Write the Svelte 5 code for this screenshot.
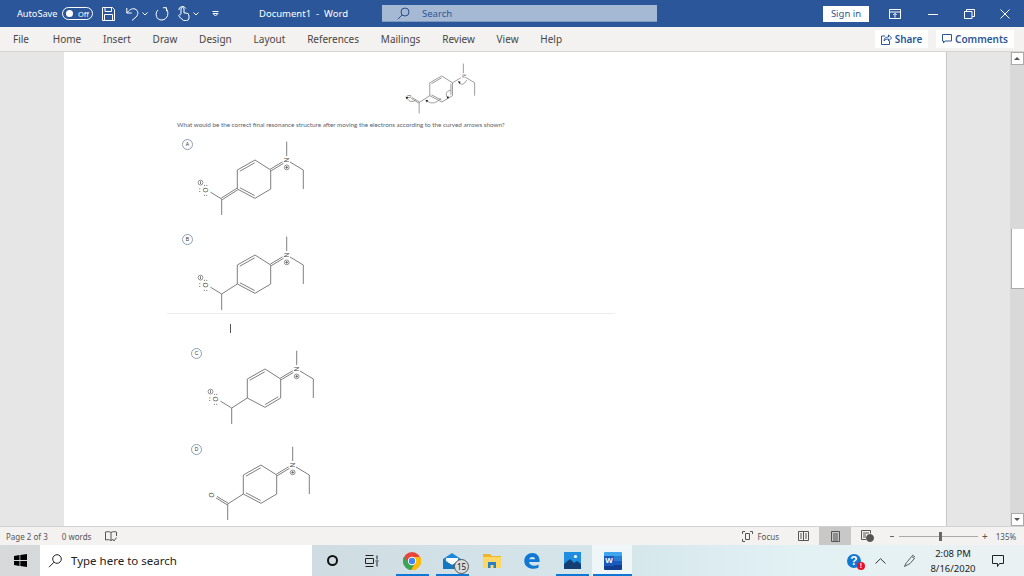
<script>
  const tabs = ['File', 'Home', 'Insert', 'Draw', 'Design', 'Layout', 'References', 'Mailings', 'Review', 'View', 'Help']

  // ring atoms, clockwise from the left upper corner
  const R = [[237.3, 170], [255, 160], [270.7, 170], [270.7, 189], [255, 198.3], [237.3, 189]]
  const C = [221.7, 199]
  const O = [210.5, 192.2]
  const NB = [283, 162.6]
  const center = [254, 179.5]

  const options = [
    { id: 'A', cls: 'optA', ring: [0, 4], exoN: true, exoC: true, oDouble: false, charged: true },
    { id: 'B', cls: 'optB', ring: [0, 4], exoN: true, exoC: false, oDouble: false, charged: true },
    { id: 'C', cls: 'optC', ring: [0, 3], exoN: true, exoC: false, oDouble: false, charged: true },
    { id: 'D', cls: 'optD', ring: [0, 4], exoN: true, exoC: false, oDouble: true, charged: false }
  ]

  const inner = (a, b) => {
    const mx = (a[0] + b[0]) / 2
    const my = (a[1] + b[1]) / 2
    const dx = center[0] - mx
    const dy = center[1] - my
    const l = Math.hypot(dx, dy)
    const s = (p) => [p[0] + (dx / l) * 2.3 + (mx - p[0]) * 0.16, p[1] + (dy / l) * 2.3 + (my - p[1]) * 0.16]
    return [s(a), s(b)]
  }

  const side = (a, b, d) => {
    const l = Math.hypot(b[0] - a[0], b[1] - a[1])
    const nx = (-(b[1] - a[1]) / l) * d
    const ny = ((b[0] - a[0]) / l) * d
    return [[a[0] + nx, a[1] + ny], [b[0] + nx, b[1] + ny]]
  }

  // page coords of the small top drawing, mapped back into the drawing's own units
  const t = (x, y) => `${(237.3 + (x - 430) / 0.68).toFixed(1)} ${(170 + (y - 82.7) / 0.68).toFixed(1)}`
  const curves = [
    [[467, 80], [463, 87], [459.5, 82.5]],
    [[451, 90], [443.5, 92], [448, 97.5]],
    [[441, 98], [435, 106], [427, 101]],
    [[416, 100], [411, 104], [407, 98]]
  ]
</script>

{#snippet bond(a, b)}
  <line x1={a[0]} y1={a[1]} x2={b[0]} y2={b[1]} />
{/snippet}

{#snippet skeleton(ring, exoN, exoC, oDouble)}
  {#each R as p, i}
    {@render bond(p, R[(i + 1) % 6])}
  {/each}
  {#each ring as i}
    {@const s = inner(R[i], R[(i + 1) % 6])}
    {@render bond(s[0], s[1])}
  {/each}
  {#if exoN}
    {@const a = side(R[2], NB, 0.9)}
    {@const b = side(R[2], NB, -0.9)}
    {@render bond(a[0], a[1])}
    {@render bond(b[0], b[1])}
  {:else}
    {@render bond(R[2], NB)}
  {/if}
  {#if exoC}
    {@const a = side(R[5], C, 0.9)}
    {@const b = side(R[5], C, -0.9)}
    {@render bond(a[0], a[1])}
    {@render bond(b[0], b[1])}
  {:else}
    {@render bond(R[5], C)}
  {/if}
  {#if oDouble}
    {@const a = side(C, O, 0.9)}
    {@const b = side(C, O, -0.9)}
    {@render bond(a[0], a[1])}
    {@render bond(b[0], b[1])}
  {:else}
    {@render bond(C, O)}
  {/if}
  {@render bond(C, [221.7, 215])}
  {@render bond([286.7, 141.7], [286.7, 156])}
  {@render bond([290, 162], [303.3, 170])}
  {@render bond([303.3, 170], [303.3, 189])}
  <text class="atom" transform="translate(286.7 160) rotate(90)" text-anchor="middle" y="2.2">N</text>
  <text class="atom" transform="translate(205.5 190) rotate(90)" text-anchor="middle" y="2.2">O</text>
{/snippet}

{#snippet chargedMarks()}
  <circle class="mark" cx="286.7" cy="167.4" r="2.4" />
  <path class="markLine" d="M285.3 167.4h2.8M286.7 166v2.8" />
  <circle class="mark" cx="200.5" cy="182.6" r="2.4" />
  <path class="markLine" d="M200.5 181.2v2.8" />
  <g class="dots">
    <circle cx="199.8" cy="188.8" r=".5" /><circle cx="199.8" cy="191.4" r=".5" />
    <circle cx="204.4" cy="195.2" r=".5" /><circle cx="206.8" cy="195.2" r=".5" />
    <circle cx="204.4" cy="185.3" r=".5" /><circle cx="206.8" cy="185.3" r=".5" />
  </g>
{/snippet}

<div class="word">
  <header class="titleBar">
    <span class="autosave">AutoSave</span>
    <span class="toggle"><i class="toggle__dot"></i><span>Off</span></span>
    <svg class="qa qa--save" width="13" height="14" viewBox="0 0 13 14"><path d="M.5.5h10l2 2v11H.5zM3 .5v4h6.500v-4M2.500 13.500v-6h8v6" /></svg>
    <svg class="qa qa--undo" width="13" height="14" viewBox="0 0 13 14"><path d="M.8 1v5h5M1 6c2-3 5-5 8-4 3 1 4 5 1 8l-4 3.500" /></svg>
    <svg class="qa qa--chev" width="6" height="4" viewBox="0 0 6 4"><path d="M.5.5 3 3 5.500.5" /></svg>
    <svg class="qa qa--redo" width="14" height="14" viewBox="0 0 14 14"><path d="M8 .7h3.500v3.500M11 1.500C14.500 5 13 12.500 7 13 1 13.500-.5 6 3 3" /></svg>
    <svg class="qa qa--touch" width="13" height="15" viewBox="0 0 13 15"><path d="M4 8V3a1.500 1.500 0 0 1 3 0v4h2a3 3 0 0 1 3 3v2a2.500 2.500 0 0 1-2.500 2.500H6.500L2 10.500c-1-1.200.5-2.500 2-1.500M1.800 4a3.700 3.700 0 0 1 7-1.500" /></svg>
    <svg class="qa qa--chev2" width="6" height="4" viewBox="0 0 6 4"><path d="M.5.5 3 3 5.500.5" /></svg>
    <svg class="qa qa--more" width="7" height="6" viewBox="0 0 7 6"><path d="M.5.500h6M1 2.500h5L3.500 5z" /></svg>
    <span class="docTitle">Document1&nbsp; - &nbsp;Word</span>
    <div class="searchBox">
      <svg width="13" height="13" viewBox="0 0 13 13"><circle cx="8" cy="5" r="4" /><path d="M5 8 .8 12.200" /></svg>
      <span>Search</span>
    </div>
    <button class="signIn">Sign in</button>
    <svg class="win win--ribbon" width="12" height="10" viewBox="0 0 12 10"><path d="M.5.500h11v9H.5zM.5 3h11M6 8.500V4.500M4.300 6 6 4.300 7.700 6" /></svg>
    <svg class="win win--min" width="10" height="10" viewBox="0 0 10 10"><path d="M0 5.500h10" /></svg>
    <svg class="win win--restore" width="11" height="10" viewBox="0 0 11 10"><path d="M.5 2.500h7.500v7H.5zM2.500 2.500V.5h8v7H8" /></svg>
    <svg class="win win--close" width="10" height="10" viewBox="0 0 10 10"><path d="m.5.500 9 9M9.500.5l-9 9" /></svg>
  </header>

  <nav class="tabs">
    {#each tabs as tab}
      <span class="tabs__item">{tab}</span>
    {/each}
    <button class="ribbonBtn ribbonBtn--share">
      <svg width="11" height="11" viewBox="0 0 11 11"><path d="M4 2H.5v8.500h8V7M3 7c0-3 2-4 4.500-4V.8L10.500 4 7.500 7V5C5.500 5 4 5.500 3 7z" /></svg>
      Share
    </button>
    <button class="ribbonBtn ribbonBtn--comments">
      <svg width="10" height="10" viewBox="0 0 10 10"><path d="M.5.500h9v6.500H3L1.500 9V7h-1z" /></svg>
      Comments
    </button>
  </nav>

  <main class="workArea">
    <div class="page">
      <svg class="molecule molecule--top" viewBox="195 135 120 85">
        {@render skeleton([0, 2, 4], false, false, true)}
        {#each curves as c}
          <path class="curve" d={`M${t(c[0][0], c[0][1])} Q${t(c[1][0], c[1][1])} ${t(c[2][0], c[2][1])}`} />
          <path class="head" d={`M${t(c[2][0] - 1.2, c[2][1] - 1.2)} L${t(c[2][0] + 1.4, c[2][1] - 0.8)} L${t(c[2][0], c[2][1] + 1.4)} z`} />
        {/each}
      </svg>
      <p class="question">What would be the correct final resonance structure after moving the electrons according to the curved arrows shown?</p>

      {#each options as opt}
        <div class="option {opt.cls}">
          <span class="badge">{opt.id}</span>
          <svg class="molecule" viewBox="195 135 120 85">
            {@render skeleton(opt.ring, opt.exoN, opt.exoC, opt.oDouble)}
            {#if opt.charged}
              {@render chargedMarks()}
            {:else}
              <circle class="mark" cx="286.7" cy="167.4" r="2.4" />
              <path class="markLine" d="M285.3 167.4h2.8M286.7 166v2.8" />
            {/if}
          </svg>
        </div>
        {#if opt.id === 'B'}
          <hr class="divider" />
          <i class="caret"></i>
        {/if}
      {/each}
    </div>
    <div class="scrollBar">
      <span class="scrollBar__btn"><i class="up"></i></span>
      <span class="scrollBar__thumb"></span>
      <span class="scrollBar__btn"><i class="down"></i></span>
    </div>
  </main>

  <footer class="statusBar">
    <span>Page 2 of 3</span>
    <span class="status__words">0 words</span>
    <svg class="statusIcon status__proof" width="12" height="11" viewBox="0 0 12 11"><path d="M6 1.500C4.500.5 2.500.5.500 1v8c2-.5 4-.5 5.500.5 1.500-1 2-1 2-1M6 1.500C7.500.5 9.500.5 11.500 1v4M6 1.500v8M7.500 8l1.500 2 2.500-3.500" /></svg>
    <svg class="statusIcon status__focus" width="11" height="11" viewBox="0 0 11 11"><path d="M.5 3V.5H3M8 .5h2.500V3M.5 8v2.500H3M3.500 2.500h4v6h-4z" /></svg>
    <span class="status__focusText">Focus</span>
    <svg class="statusIcon status__read" width="11" height="10" viewBox="0 0 11 10"><path d="M.5.500h10v9H.5zM5.500.5v9M2 3h2M2 5h2M2 7h2M7 3h2M7 5h2M7 7h2" /></svg>
    <span class="status__print">
      <svg class="statusIcon" width="9" height="11" viewBox="0 0 9 11"><path d="M.5.500h8v10h-8zM2 3h5M2 5h5M2 7h5M2 9h5" /></svg>
    </span>
    <svg class="statusIcon status__web" width="13" height="12" viewBox="0 0 13 12"><path d="M.5.500h9v3M.5.500v9H5M2 3h6M2 5h3M2 7h3" /><circle cx="9" cy="8" r="3.500" fill="#555" /></svg>
    <span class="zoomSlider">
      <i class="zoomSlider__minus"></i>
      <span class="zoomSlider__track"><i class="zoomSlider__thumb"></i></span>
      <span class="zoomSlider__plus">+</span>
    </span>
    <span class="status__pct">135%</span>
  </footer>

  <div class="taskbar">
    <span class="task task--start">
      <svg width="13" height="13" viewBox="0 0 13 13"><path fill="#000" d="M0 2 5.500 1.100V6H0zM6.300 1 13 0v6H6.300zM0 7h5.500v4.900L0 11zM6.300 7H13v6l-6.700-1z" /></svg>
    </span>
    <div class="taskSearch">
      <svg width="14" height="14" viewBox="0 0 14 14"><circle cx="9" cy="5" r="4.300" /><path d="M6 8.200 1 13.200" /></svg>
      <span>Type here to search</span>
    </div>
    <span class="task"><i class="cortana"></i></span>
    <span class="task">
      <svg class="taskView" width="14" height="12" viewBox="0 0 14 12"><path d="M.5.500h8M.5 11.500h8M.5 3.500h8v5h-8zM12 .5v4M12 7v4.500M10.500 6h3" /></svg>
    </span>
    <span class="task task--open">
      <svg width="18" height="18" viewBox="0 0 18 18">
        <circle cx="9" cy="9" r="9" fill="#e8453c" />
        <path fill="#34a853" d="M1.200 4.500A9 9 0 0 0 8 18l3.500-6-6-.5z" />
        <path fill="#fbbc05" d="M9 5h8.200A9 9 0 0 1 8 18l4-6.500z" />
        <circle cx="9" cy="9" r="4.200" fill="#fff" />
        <circle cx="9" cy="9" r="3.200" fill="#4285f4" />
      </svg>
    </span>
    <span class="task task--open">
      <svg width="18" height="16" viewBox="0 0 18 16">
        <path fill="#1e88d8" d="M0 6 9 0l9 6v10H0z" />
        <path fill="#fff" d="M3 5h12v4l-6 3-6-3z" />
        <path fill="#1577c2" d="M0 6l9 6 9-6v10H0z" />
      </svg>
      <b class="mailBadge">15</b>
    </span>
    <span class="task">
      <svg width="18" height="15" viewBox="0 0 18 15">
        <path fill="#f0b429" d="M0 1h7l2 2h9v12H0z" />
        <path fill="#ffd766" d="M0 4h18v11H0z" />
        <path fill="#2a7fc9" d="M5 9h8v6h-2.500v-3h-3v3H5z" />
      </svg>
    </span>
    <span class="task">
      <svg width="16" height="16" viewBox="0 0 16 16"><path fill="#0f78d4" d="M15.600 9H5c.2 3.500 5.500 5 9.500 2.500v3.300C8.500 17.500 .3 15 .3 8 .3 3 4 0 8.500 0c4.500 0 7.500 3.500 7.100 9zM5.200 6.200h6C11 3.200 5.800 3.200 5.200 6.200z" /></svg>
    </span>
    <span class="task task--open">
      <svg width="17" height="17" viewBox="0 0 17 17">
        <path fill="#1e8fe0" d="M0 0h17v17H0z" />
        <path fill="#143f73" d="M0 17v-5l6-5 4 4 3-2 4 3v5z" />
        <circle cx="11.500" cy="4.500" r="1.600" fill="#fff" />
      </svg>
    </span>
    <span class="task task--open task--active">
      <span class="wordIcon">
        <i></i><i></i><i></i><i></i>
        <b>W</b>
      </span>
    </span>
    <div class="tray">
      <span class="helpIcon">?<i>!</i></span>
      <svg class="tray__chev" width="11" height="6" viewBox="0 0 11 6"><path d="M.5 5.500 5.500.7l5 4.800" /></svg>
      <svg class="tray__pen" width="12" height="13" viewBox="0 0 12 13"><path d="M.5 12.500c1-2 1-3 3-5l4-5 3 2-4.500 5c-2 1.500-3 1.500-3 1.500zM8 1l3 2" /></svg>
      <div class="clock"><span>2:08 PM</span><span>8/16/2020</span></div>
      <svg class="tray__note" width="12" height="12" viewBox="0 0 12 12"><path d="M.5.500h11v8H7.500l-2 3v-3H.5z" /></svg>
    </div>
  </div>
</div>

<style>
  :global(body) {
    margin: 0;
    overflow: hidden;
  }

  .word {
    width: 1024px;
    height: 576px;
    display: flex;
    flex-direction: column;
    font-family: 'Noto Sans', 'Open Sans', sans-serif;
    overflow: hidden;
  }

  svg {
    flex: none;
    fill: none;
  }

  /* title bar */
  .titleBar {
    height: 27px;
    flex: none;
    background: #2b579a;
    color: #fff;
    display: flex;
    align-items: center;
    padding-left: 17px;
    font-size: 9.5px;
    box-sizing: border-box;
  }

  .autosave {
    width: 40px;
    font-size: 9.2px;
    white-space: nowrap;
  }

  .toggle {
    width: 31px;
    height: 13px;
    margin-left: 5px;
    border: 1px solid #fff;
    border-radius: 7px;
    box-sizing: border-box;
    display: flex;
    align-items: center;
    gap: 5px;
    padding-left: 3px;
    font-size: 7.5px;
  }

  .toggle__dot {
    width: 7px;
    height: 7px;
    background: #fff;
    border-radius: 50%;
  }

  .qa path {
    stroke: #fff;
    stroke-width: 1;
  }

  .qa--save { margin-left: 9px; }
  .qa--undo { margin-left: 11px; }
  .qa--chev { margin-left: 3px; }
  .qa--redo { margin-left: 7px; }
  .qa--touch { margin-left: 8px; }
  .qa--chev2 { margin-left: 3px; }
  .qa--more { margin-left: 13px; }

  .docTitle {
    margin-left: 40px;
    width: 123px;
    white-space: nowrap;
  }

  .searchBox {
    width: 275px;
    height: 17px;
    background: #a5b8d4;
    border-bottom: 1px solid #7f9abf;
    box-sizing: border-box;
    display: flex;
    align-items: center;
    gap: 12px;
    padding-left: 15px;
    color: #2b579a;
  }

  .searchBox svg {
    stroke: #2b4f85;
    stroke-width: 1;
  }

  .signIn {
    margin-left: 166px;
    width: 46px;
    height: 16px;
    padding: 0;
    border: 0;
    background: #fff;
    color: #2b579a;
    font: 9.5px 'Noto Sans', sans-serif;
  }

  .win {
    stroke: #fff;
    stroke-width: 1;
  }

  .win--ribbon { margin-left: 20px; }
  .win--min { margin-left: 27px; }
  .win--restore { margin-left: 26px; }
  .win--close { margin-left: 25px; }

  /* ribbon tabs */
  .tabs {
    height: 25px;
    flex: none;
    background: #f3f2f1;
    border-bottom: 1px solid #d6d5d4;
    box-sizing: border-box;
    display: flex;
    align-items: center;
    gap: 21.8px;
    padding-left: 13px;
    font-size: 10px;
    color: #484644;
  }

  .tabs__item:first-child {
    margin-right: 2px;
  }

  .ribbonBtn {
    height: 18px;
    padding: 0;
    border: 0;
    background: #fff;
    color: #2b579a;
    font: 600 10px 'Noto Sans', sans-serif;
    display: flex;
    align-items: center;
    justify-content: center;
    gap: 3px;
  }

  .ribbonBtn svg {
    stroke: #2b579a;
    stroke-width: 1;
  }

  .ribbonBtn--share {
    width: 53px;
    margin-left: auto;
  }

  .ribbonBtn--comments {
    width: 78px;
    margin-left: -13.8px;
    margin-right: 10px;
  }

  /* document */
  .workArea {
    flex: 1;
    min-height: 0;
    background: #e6e6e6;
    display: flex;
    justify-content: space-between;
    padding-left: 64px;
  }

  .page {
    width: 882px;
    background: #fff;
    border-right: 1px solid #c6c6c6;
    overflow: hidden;
  }

  .molecule {
    display: block;
    width: 120px;
    height: 85px;
    stroke: #6f6f6f;
    stroke-width: 0.9;
  }

  .molecule--top {
    width: 81.6px;
    height: 57.8px;
    margin: 7px 0 0 337px;
    stroke-width: 1;
  }

  .atom {
    font: 6.5px 'Liberation Sans', sans-serif;
    fill: #4a4a4a;
    stroke: none;
  }

  .mark {
    fill: #fff;
    stroke: #666;
    stroke-width: 0.7;
  }

  .markLine {
    stroke: #444;
    stroke-width: 0.7;
  }

  .dots {
    fill: #444;
    stroke: none;
  }

  .curve {
    stroke: #777;
    stroke-width: 1;
  }

  .head {
    fill: #111;
    stroke: none;
  }

  .question {
    margin: 4px 0 6px 113px;
    height: 8px;
    font: 6.3px/8px Lato, sans-serif;
    color: #5a6270;
    white-space: nowrap;
  }

  .option {
    display: flex;
    height: 95px;
    padding-left: 118px;
  }

  .optB {
    height: 83px;
  }

  .optC {
    padding-left: 127px;
    height: 96px;
  }

  .optD {
    padding-left: 127px;
  }

  .optC .molecule {
    margin-left: 1px;
  }

  .optD .molecule {
    margin-left: -3px;
  }

  .badge {
    width: 11px;
    height: 11px;
    margin: 4px 2px 0 0;
    border: 1px solid #8aa0b4;
    border-radius: 50%;
    box-sizing: border-box;
    flex: none;
    font: 5px/9px 'Liberation Sans', sans-serif;
    text-align: center;
    color: #333;
  }

  .divider {
    margin: 0 0 0 103px;
    width: 448px;
    height: 1px;
    border: 0;
    background: #ececec;
  }

  .caret {
    display: block;
    width: 1px;
    height: 9px;
    margin: 10px 0 11px 166px;
    background: #555;
  }

  .scrollBar {
    width: 14px;
    background: #d9d9d9;
    display: flex;
    flex-direction: column;
    align-items: center;
  }

  .scrollBar__btn {
    width: 13px;
    height: 13px;
    background: #fff;
    border: 1px solid #ababab;
    box-sizing: border-box;
    display: flex;
    align-items: center;
    justify-content: center;
  }

  .scrollBar__thumb {
    width: 13px;
    height: 60px;
    margin: 164px 0 224px;
    background: #fff;
    border-left: 1px solid #ababab;
    border-bottom: 1px solid #ababab;
    box-sizing: border-box;
  }

  .up,
  .down {
    width: 0;
    height: 0;
    border: 3px solid transparent;
  }

  .up {
    border-bottom: 3px solid #555;
    margin-top: -3px;
  }

  .down {
    border-top: 3px solid #555;
    margin-top: 3px;
  }

  /* status bar */
  .statusBar {
    height: 19px;
    flex: none;
    background: #f3f2f1;
    border-top: 1px solid #d2d2d2;
    box-sizing: border-box;
    display: flex;
    align-items: center;
    padding-left: 6px;
    font-size: 8px;
    color: #555;
  }

  .statusIcon {
    stroke: #555;
    stroke-width: 1;
  }

  .status__words { margin-left: 14px; }
  .status__proof { margin-left: 14px; }
  .status__focus { margin-left: 625px; }
  .status__focusText { margin-left: 4px; }
  .status__read { margin-left: 19px; }

  .status__print {
    width: 32px;
    height: 18px;
    margin-left: 10px;
    background: #c8c8c8;
    display: flex;
    align-items: center;
    justify-content: center;
  }

  .status__web { margin-left: 10px; }

  .zoomSlider {
    margin-left: 16px;
    display: flex;
    align-items: center;
  }

  .zoomSlider__minus {
    width: 4px;
    height: 1px;
    background: #666;
  }

  .zoomSlider__track {
    width: 79px;
    height: 1px;
    margin-left: 5px;
    background: #aaa;
    position: relative;
  }

  .zoomSlider__thumb {
    position: absolute;
    left: 40px;
    top: -4px;
    width: 3px;
    height: 9px;
    background: #666;
  }

  .zoomSlider__plus {
    margin-left: 4px;
    font-size: 10px;
    line-height: 10px;
  }

  .status__pct { margin-left: 8px; }

  /* taskbar */
  .taskbar {
    height: 31px;
    flex: none;
    background: linear-gradient(90deg, #d7d9da 0, #cfdde3 32%, #d6e7ec 62%, #e2f1f4 78%, #ebf1f2 100%);
    display: flex;
    align-items: center;
  }

  .task {
    width: 40px;
    height: 31px;
    flex: none;
    box-sizing: border-box;
    display: flex;
    align-items: center;
    justify-content: center;
    position: relative;
  }

  /* running-app underline, a bit shorter than the slot */
  .task--open::after {
    content: '';
    position: absolute;
    left: 4px;
    right: 3px;
    bottom: 0;
    height: 2px;
    background: #0f78d4;
  }

  .task--active {
    background: #eef6f7;
  }

  .task--active::after {
    left: 1px;
    right: 0;
  }

  .taskSearch {
    width: 272px;
    height: 31px;
    background: #fff;
    display: flex;
    align-items: center;
    gap: 9px;
    padding-left: 8px;
    box-sizing: border-box;
    font-size: 11.5px;
    color: #222;
  }

  .taskSearch svg {
    stroke: #222;
    stroke-width: 1;
  }

  .cortana {
    width: 11px;
    height: 11px;
    border: 2px solid #111;
    border-radius: 50%;
    box-sizing: border-box;
  }

  .taskView {
    stroke: #222;
    stroke-width: 1;
  }

  .mailBadge {
    position: absolute;
    left: 22px;
    top: 14px;
    width: 15px;
    height: 15px;
    border: 1px solid #555;
    border-radius: 50%;
    box-sizing: border-box;
    background: #d8dedf;
    color: #111;
    font: 8px/13px 'Noto Sans', sans-serif;
    text-align: center;
  }

  .wordIcon {
    width: 18px;
    height: 18px;
    margin-left: 2px;
    position: relative;
    display: flex;
    flex-direction: column;
    border-radius: 1px;
    overflow: hidden;
  }

  .wordIcon i {
    flex: 1;
    background: #2b7cd3;
  }

  .wordIcon i:nth-child(1) { background: #41a5ee; }
  .wordIcon i:nth-child(3) { background: #185abd; }
  .wordIcon i:nth-child(4) { background: #103f91; }

  .wordIcon b {
    position: absolute;
    left: 0;
    top: 4px;
    width: 10px;
    height: 10px;
    background: #185abd;
    color: #fff;
    font: 700 8px/10px 'Liberation Sans', sans-serif;
    text-align: center;
  }

  .tray {
    flex: 1;
    display: flex;
    align-items: center;
    padding-left: 215px;
  }

  .helpIcon {
    width: 14px;
    height: 14px;
    border-radius: 50%;
    background: #0f78d4;
    color: #fff;
    font: 700 12px/14px 'Liberation Sans', sans-serif;
    text-align: center;
    position: relative;
  }

  .helpIcon i {
    position: absolute;
    right: -4px;
    bottom: -2px;
    width: 8px;
    height: 8px;
    background: #e81123;
    border-radius: 50%;
    font: 700 7px/8px 'Liberation Sans', sans-serif;
  }

  .tray__chev {
    margin-left: 14px;
    stroke: #333;
    stroke-width: 1;
  }

  .tray__pen {
    margin-left: 18px;
    stroke: #333;
    stroke-width: 0.8;
  }

  .clock {
    width: 54px;
    margin-left: 10px;
    display: flex;
    flex-direction: column;
    align-items: center;
    gap: 2px;
    font-size: 9.5px;
    line-height: 13px;
    color: #222;
  }

  .tray__note {
    margin-left: 12px;
    stroke: #222;
    stroke-width: 1;
  }
</style>
